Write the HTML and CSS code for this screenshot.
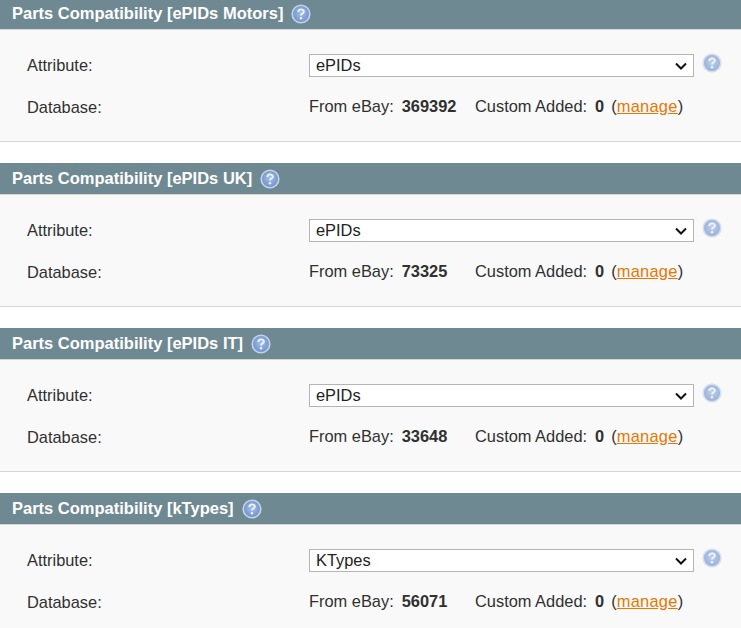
FILE: index.html
```html
<!DOCTYPE html>
<html lang="en">
<head>
<meta charset="utf-8">
<title>Parts Compatibility</title>
<link rel="stylesheet" href="styles.css">
</head>
<body>
<svg class="defs" width="0" height="0" aria-hidden="true">
  <defs>
    <radialGradient id="hg" cx="50%" cy="45%" r="55%">
      <stop offset="0" stop-color="#a9c2e6"/>
      <stop offset="0.7" stop-color="#7d9ed2"/>
      <stop offset="1" stop-color="#6f92c8"/>
    </radialGradient>
    <symbol id="help" viewBox="0 0 20 20">
      <circle cx="10" cy="10" r="8.800" fill="url(#hg)" stroke="#c4d3ea" stroke-width="1.600"/>
      <path d="M7.300 8c0-3.400 5.600-3.400 5.600-.4 0 2-2.900 1.900-2.900 3.900" fill="none" stroke="#eef3fb" stroke-width="1.800"/>
      <circle cx="10" cy="14.200" r="1.200" fill="#eef3fb"/>
    </symbol>
    <symbol id="chev" viewBox="0 0 12 8">
      <path d="M1 1.500l5 5 5-5" fill="none" stroke="#111" stroke-width="2"/>
    </symbol>
  </defs>
</svg>

<section class="block first">
  <h2 class="head">Parts Compatibility [ePIDs Motors]<svg class="help"><use href="#help"/></svg></h2>
  <div class="body">
    <div class="row attr"><span class="label">Attribute:</span>
      <span class="selwrap"><select class="sel"><option>ePIDs</option></select><svg class="chev"><use href="#chev"/></svg></span><svg class="help dim"><use href="#help"/></svg></div>
    <div class="row db"><span class="label">Database:</span>
      <span class="val">From eBay:<b class="n1">369392</b></span><span class="custom">Custom Added:<b class="n2">0</b>(<a href="#">manage</a>)</span></div>
  </div>
</section>

<section class="block">
  <h2 class="head">Parts Compatibility [ePIDs UK]<svg class="help"><use href="#help"/></svg></h2>
  <div class="body">
    <div class="row attr"><span class="label">Attribute:</span>
      <span class="selwrap"><select class="sel"><option>ePIDs</option></select><svg class="chev"><use href="#chev"/></svg></span><svg class="help dim"><use href="#help"/></svg></div>
    <div class="row db"><span class="label">Database:</span>
      <span class="val">From eBay:<b class="n1">73325</b></span><span class="custom">Custom Added:<b class="n2">0</b>(<a href="#">manage</a>)</span></div>
  </div>
</section>

<section class="block">
  <h2 class="head">Parts Compatibility [ePIDs IT]<svg class="help"><use href="#help"/></svg></h2>
  <div class="body">
    <div class="row attr"><span class="label">Attribute:</span>
      <span class="selwrap"><select class="sel"><option>ePIDs</option></select><svg class="chev"><use href="#chev"/></svg></span><svg class="help dim"><use href="#help"/></svg></div>
    <div class="row db"><span class="label">Database:</span>
      <span class="val">From eBay:<b class="n1">33648</b></span><span class="custom">Custom Added:<b class="n2">0</b>(<a href="#">manage</a>)</span></div>
  </div>
</section>

<section class="block">
  <h2 class="head">Parts Compatibility [kTypes]<svg class="help"><use href="#help"/></svg></h2>
  <div class="body">
    <div class="row attr"><span class="label">Attribute:</span>
      <span class="selwrap"><select class="sel"><option>KTypes</option></select><svg class="chev"><use href="#chev"/></svg></span><svg class="help dim"><use href="#help"/></svg></div>
    <div class="row db"><span class="label">Database:</span>
      <span class="val">From eBay:<b class="n1">56071</b></span><span class="custom">Custom Added:<b class="n2">0</b>(<a href="#">manage</a>)</span></div>
  </div>
</section>
</body>
</html>
```
FILE: styles.css
```css
html, body {
  margin: 0;
  padding: 0;
  height: 628px;
  overflow: hidden;
  background: #fff;
}
body {
  font-family: "Liberation Sans", Arial, sans-serif;
  font-size: 16.4px;
  color: #303030;
}
.defs { position: absolute; }
.block { margin-bottom: 21px; }
.first { margin-top: -2px; }
.head {
  margin: 0;
  height: 32px;
  padding-left: 12px;
  display: flex;
  align-items: center;
  background: #6f8992;
  color: #fff;
  font-size: 16.5px;
  font-weight: bold;
  border-bottom: 1px solid #d6d6d6;
  box-sizing: border-box;
}
.head .help { margin-left: 8px; }
.help { width: 20px; height: 20px; flex: none; }
.dim { opacity: .7; margin: -4px 0 0 8px; }
.body {
  height: 112px;
  box-sizing: border-box;
  background: #f9f9f9;
  border-bottom: 1px solid #d6d6d6;
  padding: 23px 0 0 27px;
}
.row { display: flex; align-items: center; }
.attr { height: 24px; }
.attr .label { padding-top: 1px; }
.db { margin-top: 17px; height: 24px; }
.label { width: 282px; flex: none; }
.db .label { padding-top: 3px; }
.selwrap { position: relative; display: flex; flex: none; }
.sel {
  appearance: none;
  width: 385px;
  height: 23px;
  box-sizing: border-box;
  border: 1px solid #b5b5b5;
  border-radius: 0;
  background: #fff;
  padding: 0 0 0 6px;
  font: 16.4px "Liberation Sans", Arial, sans-serif;
  color: #222;
}
.chev {
  position: absolute;
  right: 7px;
  top: 8px;
  width: 12px;
  height: 8px;
}
.val { width: 166px; flex: none; }
.n1 { margin-left: 8px; }
.n2 { margin: 0 7px 0 8px; }
a { color: #ea7601; letter-spacing: .3px; }
```
